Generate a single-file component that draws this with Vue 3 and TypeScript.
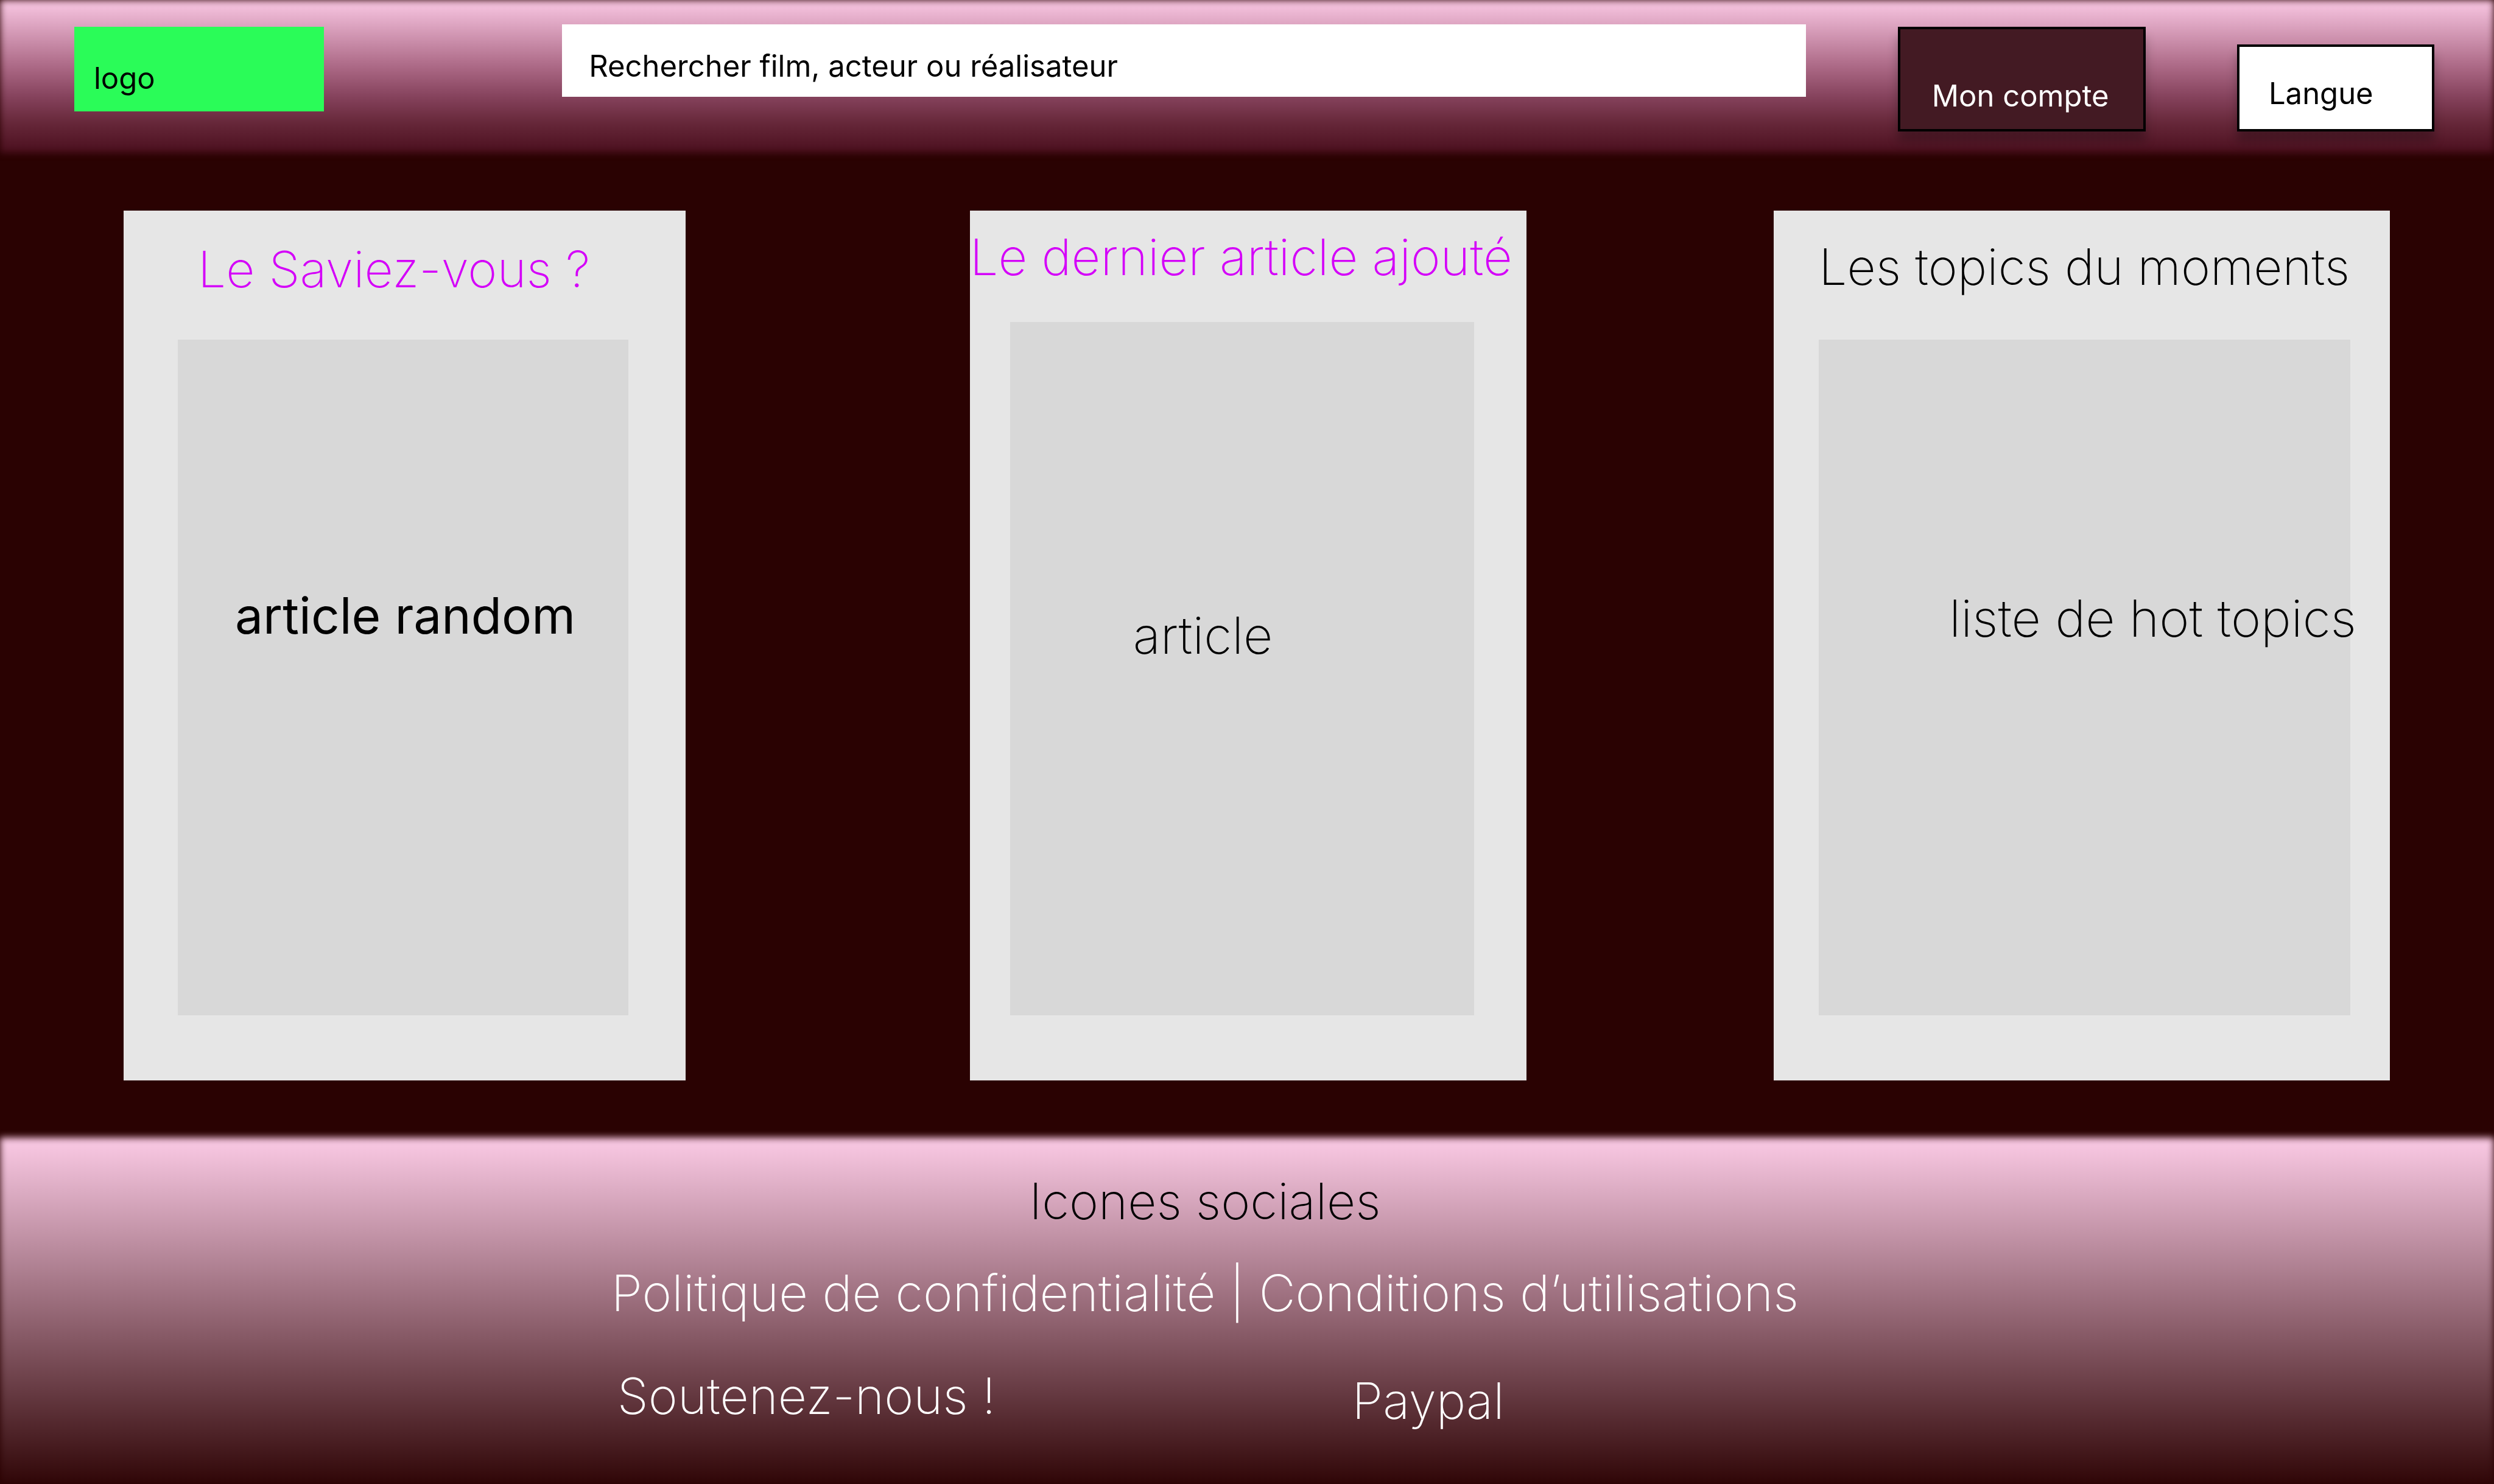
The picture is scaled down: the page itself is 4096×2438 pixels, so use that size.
<script setup lang="ts">
import { ref } from 'vue'

interface Card {
  id: string
  title: string
  body: string
  accent: boolean
}

const search = ref<string>('')

const cards: Card[] = [
  { id: 'saviez', title: 'Le Saviez-vous ?', body: 'article random', accent: true },
  { id: 'dernier', title: 'Le dernier article ajouté', body: 'article', accent: true },
  { id: 'topics', title: 'Les topics du moments', body: 'liste de hot topics', accent: false },
]
</script>

<template>
  <div class="page">
    <header class="header">
      <a class="logo" href="#">logo</a>
      <input
        v-model="search"
        class="search"
        type="search"
        aria-label="Rechercher"
        placeholder="Rechercher film, acteur ou réalisateur"
      />
      <button class="box account" type="button">Mon compte</button>
      <button class="box language" type="button" aria-haspopup="listbox">Langue</button>
    </header>

    <main class="cards">
      <section v-for="card in cards" :key="card.id" class="card" :class="card.id">
        <h2 class="title" :class="{ accent: card.accent }">{{ card.title }}</h2>
        <div class="panel">
          <p class="body">{{ card.body }}</p>
        </div>
      </section>
    </main>

    <footer class="footer">
      <div class="footer-content">
        <p class="social">Icones sociales</p>
        <nav class="legal">
          <a href="#">Politique de confidentialité</a> | <a href="#">Conditions d’utilisations</a>
        </nav>
        <div class="support">
          <span>Soutenez-nous !</span>
          <a class="paypal" href="#">Paypal</a>
        </div>
      </div>
    </footer>
  </div>
</template>

<style>
body {
  margin: 0;
  background: #2a0202;
}
</style>

<style scoped>
* {
  box-sizing: border-box;
}

.page {
  display: flex;
  flex-direction: column;
  min-height: 100vh;
  overflow: hidden;
  background: #2a0202;
  color: #000;
  font-family: Inter, sans-serif;
  font-size: 82px;
  font-weight: 200;
  line-height: 100px;
  white-space: nowrap;
}

h2,
p {
  margin: 0;
  font: inherit;
}

a {
  color: inherit;
  text-decoration: none;
}

.header,
.footer {
  position: relative;
  isolation: isolate;
}

/* Soft-edged gradient behind the bar */
.header::before,
.footer::before {
  content: '';
  position: absolute;
  inset: 0;
  z-index: -1;
  filter: blur(6px);
}

.header::before {
  background: linear-gradient(#fac8e4, #ad6a87 43%, #84415b 64%, #67283a 80%, #4b0f1e);
}

.footer::before {
  background: linear-gradient(#fbcae5, #300607);
}

/* Even-numbered columns are the flexible gaps between the controls */
.header {
  display: grid;
  grid-template-columns:
    minmax(0, 410fr) minmax(0, 391fr) minmax(0, 2042fr) minmax(0, 151fr)
    minmax(0, 407fr) minmax(0, 150fr) minmax(0, 324fr);
  align-items: start;
  height: 251px;
  padding: 40px 98px 0 122px;
  font-size: 49px;
  font-weight: 400;
  line-height: 60px;
}

.logo {
  grid-column: 1;
  margin-top: 4px;
  padding: 55px 32px 24px;
  background: #2afc58;
}

.search {
  grid-column: 3;
  width: 100%;
  height: 119px;
  padding: 38px 44px 21px;
  border: 0;
  border-radius: 0;
  appearance: none;
  background: #fff;
  color: #000;
  font: inherit;
}

.search::placeholder {
  color: #000;
  opacity: 1;
}

.box {
  border: 4px solid #000;
  border-radius: 0;
  box-shadow: 0 16px 16px rgba(0, 0, 0, 0.25);
  font: inherit;
  text-align: left;
}

.account {
  grid-column: 5;
  margin-top: 4px;
  padding: 80px 52px 24px;
  background: #431a23;
  color: #fff;
}

.language {
  grid-column: 7;
  margin-top: 33px;
  padding: 47px 48px 28px;
  background: #fff;
  color: #000;
}

/* Columns 2 and 4 are the flexible gaps between the cards */
.cards {
  display: grid;
  grid-template-columns:
    minmax(0, 923fr) minmax(0, 467fr) minmax(0, 915fr) minmax(0, 406fr) minmax(0, 1012fr);
  flex: 1;
  padding: 95px 171px 94px 203px;
}

.card {
  display: flex;
  flex-direction: column;
  background: #e6e6e6;
}

.accent {
  color: #d400f9;
}

.panel {
  flex: 1;
  background: #d8d8d8;
}

.saviez {
  grid-column: 1;
  padding: 47px 94px 107px 89px;
}

.saviez .title {
  margin-bottom: 65px;
  padding-left: 33px;
}

.saviez .body {
  padding: 404px 0 0 94px;
  font-weight: 400;
}

.dernier {
  grid-column: 3;
  padding: 26px 86px 107px 66px;
}

.dernier .title {
  margin: 0 -66px 57px;
  font-size: 83px;
}

.dernier .body {
  padding: 465px 0 0 202px;
  font-size: 84px;
}

.topics {
  grid-column: 5;
  padding: 43px 65px 107px 74px;
}

.topics .title {
  margin-bottom: 69px;
}

.topics .body {
  padding: 408px 0 0 214px;
  font-size: 84px;
}

.footer {
  display: flex;
  justify-content: center;
  padding: 55px 138px 86px 0;
  color: #fff;
}

.social {
  color: #000;
  text-align: center;
}

.legal {
  margin: 50px 0 70px;
  font-size: 83px;
}

.support {
  display: grid;
  grid-template-columns: 1204fr 732fr;
  padding-left: 10px;
}

.paypal {
  padding-top: 8px;
}
</style>
